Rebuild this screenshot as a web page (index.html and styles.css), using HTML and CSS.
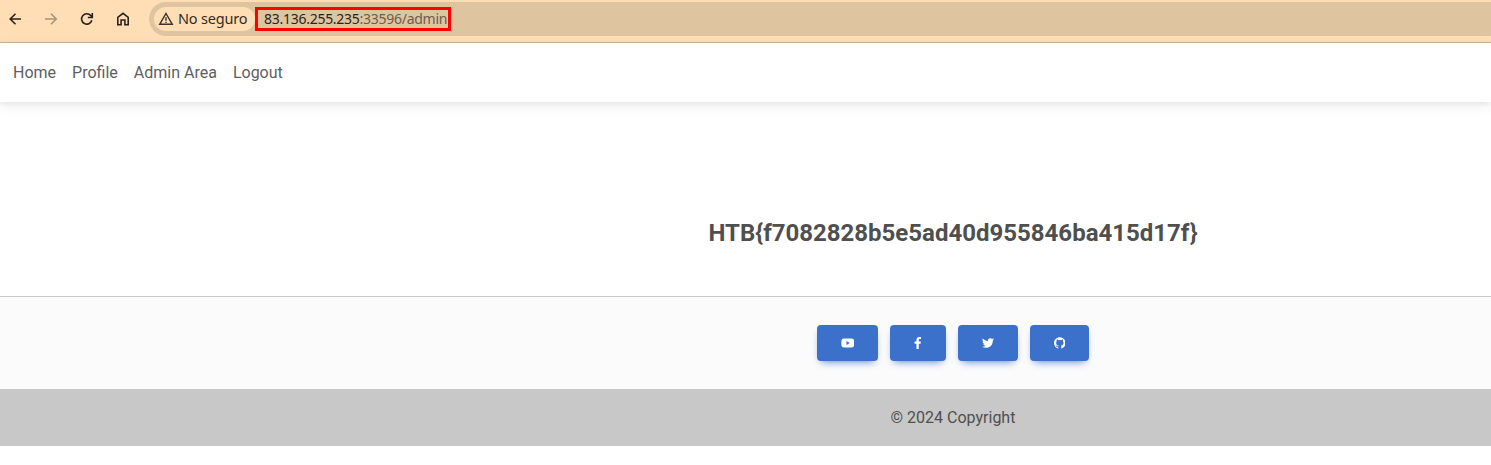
FILE: index.html
```html
<!DOCTYPE html>
<html lang="es">
<head>
<meta charset="utf-8">
<title>Admin</title>
<link rel="stylesheet" href="styles.css">
</head>
<body>
<div class="window">
  <header class="toolbar">
    <svg class="tool" viewBox="0 0 16 16"><path d="M14 8H3M8.500 2.700L3.200 8L8.500 13.300"/></svg>
    <svg class="tool disabled" viewBox="0 0 16 16"><path d="M2 8H13M8 2.700L13.300 8L8 13.300"/></svg>
    <svg class="tool" viewBox="0 0 16 16"><path d="M12.800 9.300A5.200 5.200 0 1 1 11.800 4.600L13 6M13.300 2V6.500H8.800"/></svg>
    <svg class="tool" viewBox="0 0 16 16"><path d="M2.800 6.300L8 2.300L13.200 6.300V13.700H9.900V9H6.100V13.700H2.800Z"/></svg>
    <div class="omnibox">
      <div class="chip">
        <svg class="warn" viewBox="0 0 16 16"><path d="M8 2.500L14.300 13.300H1.700Z"/><path d="M8 6.300V9.700M8 10.700V12"/></svg>
        <span>No seguro</span>
      </div>
      <div class="url"><span class="host">83.136.255.235</span>:33596/admin</div>
    </div>
  </header>
  <nav class="nav"><a>Home</a><a>Profile</a><a>Admin Area</a><a>Logout</a></nav>
  <main class="content"><h1>HTB{f7082828b5e5ad40d955846ba415d17f}</h1></main>
  <footer class="footer">
    <div class="social">
      <a class="btn"><svg class="youtube" viewBox="0 0 576 512"><path d="M549.655 124.083c-6.281-23.65-24.787-42.276-48.284-48.597C458.781 64 288 64 288 64S117.22 64 74.629 75.486c-23.497 6.322-42.003 24.947-48.284 48.597-11.412 42.867-11.412 132.305-11.412 132.305s0 89.438 11.412 132.305c6.281 23.65 24.787 41.5 48.284 47.821C117.22 448 288 448 288 448s170.78 0 213.371-11.486c23.497-6.321 42.003-24.171 48.284-47.821 11.412-42.867 11.412-132.305 11.412-132.305s0-89.438-11.412-132.305zm-317.51 213.508V175.185l142.739 81.205-142.739 81.201z"/></svg></a>
      <a class="btn"><svg class="facebook" viewBox="0 0 320 512"><path d="M279.14 288l14.22-92.66h-88.91v-60.13c0-25.35 12.42-50.06 52.24-50.06h40.42V6.26S260.43 0 225.36 0c-73.22 0-121.08 44.38-121.08 124.72v70.62H22.89V288h81.39v224h100.17V288z"/></svg></a>
      <a class="btn"><svg class="twitter" viewBox="0 0 512 512"><path d="M459.37 151.716c.325 4.548.325 9.097.325 13.645 0 138.72-105.583 298.558-298.558 298.558-59.452 0-114.68-17.219-161.137-47.106 8.447.974 16.568 1.299 25.34 1.299 49.055 0 94.213-16.568 130.274-44.832-46.132-.975-84.792-31.188-98.112-72.772 6.498.974 12.995 1.624 19.818 1.624 9.421 0 18.843-1.3 27.614-3.573-48.081-9.747-84.143-51.98-84.143-102.985v-1.299c13.969 7.797 30.214 12.67 47.431 13.319-28.264-18.843-46.781-51.005-46.781-87.391 0-19.492 5.197-37.36 14.294-52.954 51.655 63.675 129.3 105.258 216.365 109.807-1.624-7.797-2.599-15.918-2.599-24.04 0-57.828 46.782-104.934 104.934-104.934 30.213 0 57.502 12.67 76.67 33.137 23.715-4.548 46.456-13.32 66.599-25.34-7.798 24.366-24.366 44.833-46.132 57.827 21.117-2.273 41.584-8.122 60.426-16.243-14.292 20.791-32.161 39.308-52.628 54.253z"/></svg></a>
      <a class="btn"><svg class="github" viewBox="0 0 16 16"><path d="M8 0C3.58 0 0 3.58 0 8c0 3.54 2.29 6.53 5.47 7.59.4.07.55-.17.55-.38 0-.19-.01-.82-.01-1.49-2.01.37-2.53-.49-2.69-.94-.09-.23-.48-.94-.82-1.13-.28-.15-.68-.52-.01-.53.63-.01 1.08.58 1.23.82.72 1.21 1.87.87 2.33.66.07-.52.28-.87.51-1.07-1.78-.2-3.64-.89-3.64-3.95 0-.87.31-1.59.82-2.15-.08-.2-.36-1.02.08-2.12 0 0 .67-.21 2.2.82.64-.18 1.32-.27 2-.27s1.36.09 2 .27c1.53-1.04 2.2-.82 2.2-.82.44 1.1.16 1.92.08 2.12.51.56.82 1.27.82 2.15 0 3.07-1.87 3.75-3.65 3.95.29.25.54.73.54 1.48 0 1.07-.01 1.93-.01 2.2 0 .21.15.46.55.38A8.01 8.01 0 0 0 16 8c0-4.42-3.58-8-8-8z"/></svg></a>
    </div>
    <div class="copyright">© 2024 Copyright</div>
  </footer>
</div>
</body>
</html>
```
FILE: styles.css
```css
* { box-sizing: border-box; }
html { overflow: hidden; }
body {
  margin: 0;
  height: 465px;
  overflow: hidden;
  background: #fff;
  color: #4f4f4f;
  font: 16px/1.6 Roboto, sans-serif;
}
.window { width: 100%; }
.toolbar {
  display: flex;
  align-items: center;
  height: 43px;
  padding: 0 0 5px 7px;
  background: #ffdeb5;
  border-bottom: 1px solid #cbb193;
}
.tool {
  flex: none;
  width: 16px;
  height: 16px;
  margin-right: 20px;
  fill: none;
  stroke: #29231f;
  stroke-width: 1.6;
}
.disabled { stroke: #a8937b; }
.omnibox {
  display: flex;
  align-items: center;
  flex: 1;
  height: 34px;
  margin-left: -2px;
  padding-left: 5px;
  border-radius: 17px 0 0 17px;
  background: #dfc4a0;
  font: 14.5px/20px "Noto Sans", sans-serif;
}
.chip {
  display: flex;
  align-items: center;
  gap: 4px;
  width: 101px;
  height: 24px;
  padding-left: 4px;
  border-radius: 12px;
  background: #ffdeb5;
  color: #332c25;
  letter-spacing: -.18px;
  white-space: nowrap;
}
.chip span { padding-bottom: 1px; }
.warn { flex: none; width: 16px; height: 16px; fill: none; stroke: #3b332c; stroke-width: 1.4; }
.url {
  width: 196px;
  height: 24px;
  margin-left: -.5px;
  padding-left: 6.5px;
  border: 3px solid #f00;
  color: #6b5d4e;
  font-size: 14px;
  letter-spacing: -.27px;
  line-height: 18px;
  white-space: nowrap;
}
.host { color: #29231f; }
.nav {
  display: flex;
  align-items: center;
  gap: 16px;
  height: 59px;
  padding-left: 13px;
  color: #5e5e5e;
  box-shadow: 0 4px 12px rgba(0, 0, 0, .07), 0 2px 4px rgba(0, 0, 0, .05);
}
/* Content and footer are centred on an axis right of the middle. */
.content { height: 194px; padding: 117px 0 0 415px; text-align: center; }
.content h1 { margin: 0; font-size: 24px; line-height: 28px; font-weight: 700; }
.footer { border-top: 1px solid #c9c9c9; background: #fbfbfb; text-align: center; }
.social { display: flex; justify-content: center; gap: 12px; padding: 28px 0 28px 415px; }
.btn {
  display: flex;
  align-items: center;
  height: 36px;
  padding: 0 24px;
  border-radius: 4px;
  background: #3b71ca;
  box-shadow: 0 4px 9px -4px #3b71ca;
}
.btn svg { height: 12px; fill: #fff; }
.youtube { width: 13.5px; }
.facebook { width: 7.5px; }
.twitter { width: 12px; }
.github { width: 11.6px; }
.copyright { height: 57px; padding: 16px 0 16px 415px; background: #c8c8c8; }
```
